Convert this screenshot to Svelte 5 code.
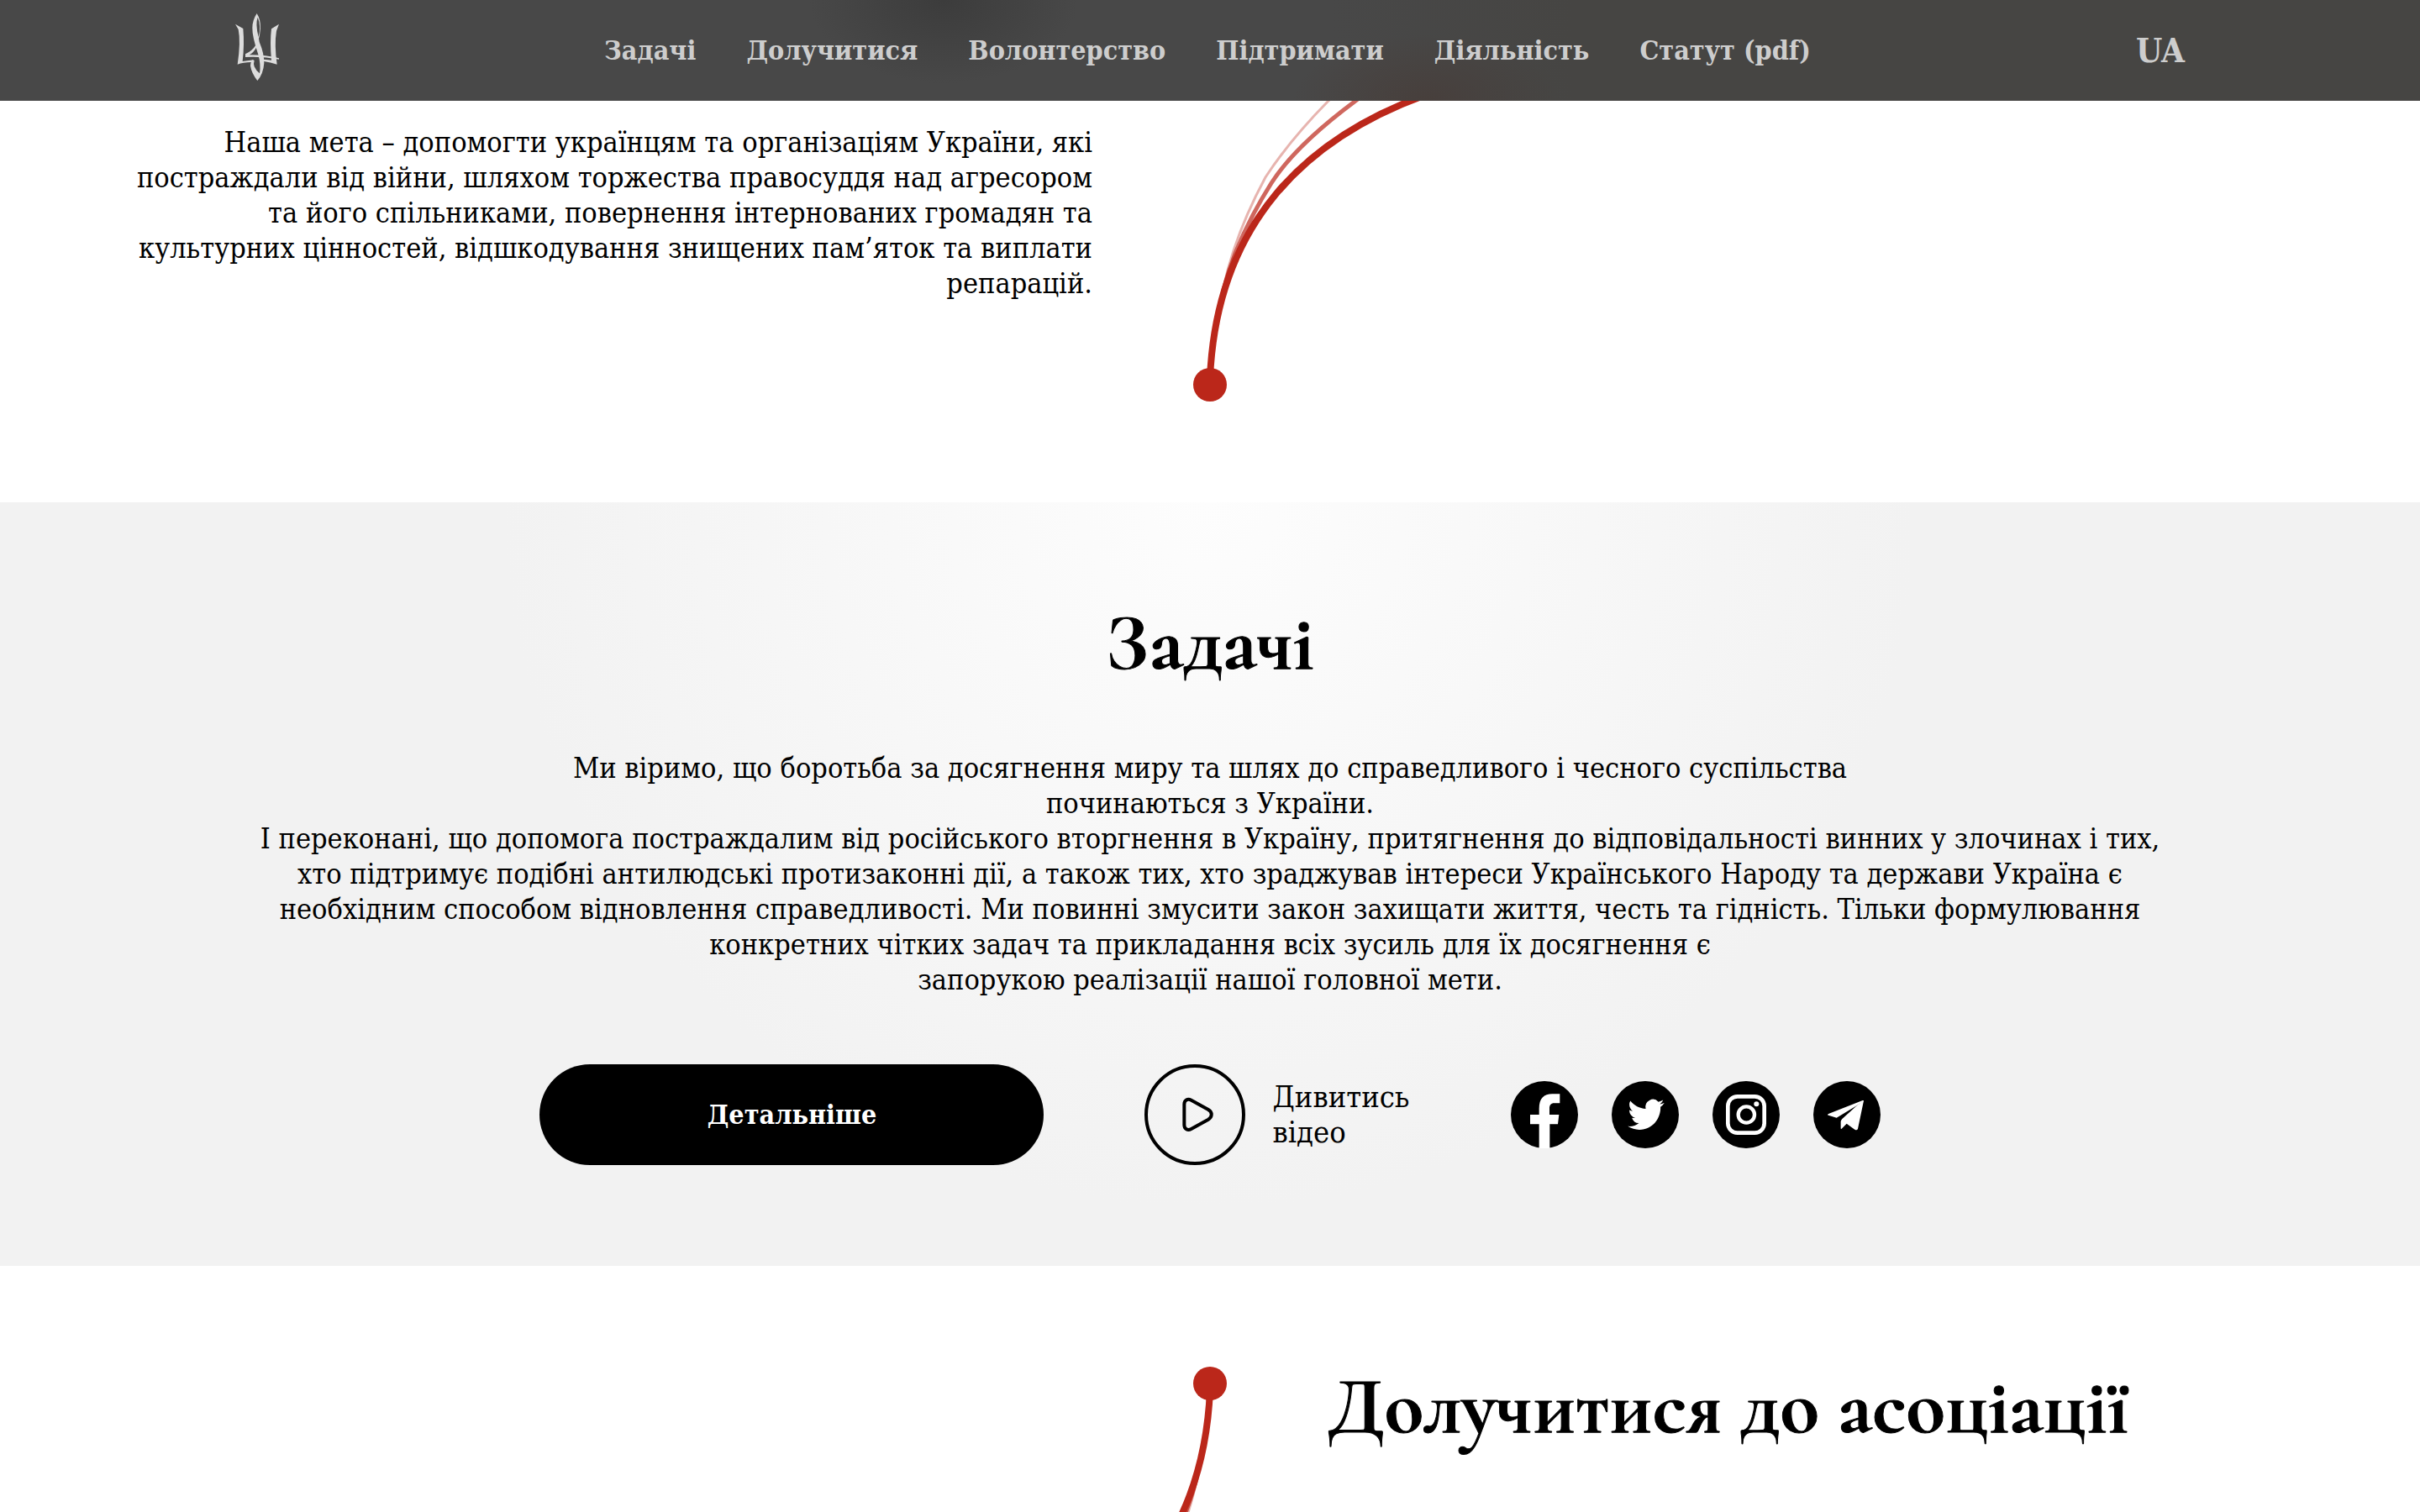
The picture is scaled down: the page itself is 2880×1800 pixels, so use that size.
<script>
  const links = ['Задачі', 'Долучитися', 'Волонтерство', 'Підтримати', 'Діяльність', 'Статут (pdf)'];

  const mission = [
    'Наша мета – допомогти українцям та організаціям України, які',
    'постраждали від війни, шляхом торжества правосуддя над агресором',
    'та його спільниками, повернення інтернованих громадян та',
    'культурних цінностей, відшкодування знищених пам’яток та виплати',
    'репарацій.'
  ];

  const tasks = [
    'Ми віримо, що боротьба за досягнення миру та шлях до справедливого і чесного суспільства',
    'починаються з України.',
    'І переконані, що допомога постраждалим від російського вторгнення в Україну, притягнення до відповідальності винних у злочинах і тих,',
    'хто підтримує подібні антилюдські протизаконні дії, а також тих, хто зраджував інтереси Українського Народу та держави Україна є',
    'необхідним способом відновлення справедливості. Ми повинні змусити закон захищати життя, честь та гідність. Тільки формулювання',
    'конкретних чітких задач та прикладання всіх зусиль для їх досягнення є',
    'запорукою реалізації нашої головної мети.'
  ];
</script>

{#snippet arc(flipped)}
  <svg class="arc" class:flipped viewBox="0 0 280 358" aria-hidden="true">
    <g fill="none" stroke="#bb271a">
      <path d="M156 222Q170 158 206 91Q234 48 280 1L300 -17" stroke-width="3" opacity=".35" />
      <path d="M156 225Q172 163 213 98Q241 54 312 1L330 -13" stroke-width="5" opacity=".7" />
      <path d="M140 330C148 145 255 45 394 -6" stroke-width="8" />
    </g>
    <circle cx="140" cy="338" r="20" fill="#bb271a" />
  </svg>
{/snippet}

<div class="page" lang="uk">
  <header>
    <a class="logo" href="#top" aria-label="Головна">
      <svg viewBox="120 48 156 240" aria-hidden="true">
        <g fill="#dcdcdc">
          <path d="M120 86L148 102Q153 160 146 219L185 214V222Q150 221 128 230Q140 150 131 105Z" />
          <path d="M276 86L267 110Q259 160 269 230Q245 222 222 219V212Q240 213 249 215Q243 150 249 103Z" />
          <path fill-rule="evenodd" d="M197 48Q211 70 210 100Q208 125 204 138L206 150Q223 190 223 225Q220 265 199 288Q178 262 174 235Q174 225 180 214L188 216Q184 228 188 238Q194 252 207 262Q212 230 202 195Q180 130 181 100Q181 72 197 48ZM200 62Q191 85 203 132Q213 92 200 62Z" />
          <path d="M156 193Q182 180 193 161L196 168Q186 188 170 196Q230 196 276 208V212Q220 201 156 204Z" />
        </g>
      </svg>
    </a>
    <nav>
      {#each links as link}
        <a href="#top">{link}</a>
      {/each}
    </nav>
    <button class="lang">UA</button>
  </header>

  <section class="split">
    <p class="mission">
      {#each mission as line}<span>{line}</span>{' '}{/each}
    </p>
    {@render arc(false)}
  </section>

  <section class="tasks">
    <h2>Задачі</h2>
    <p>
      {#each tasks as line}<span>{line}</span>{' '}{/each}
    </p>
    <div class="actions">
      <button class="more">Детальніше</button>
      <button class="video">
        <svg viewBox="0 0 360 360" fill="none" stroke="#000" stroke-width="12" aria-hidden="true">
          <circle cx="180" cy="180" r="174" />
          <path d="M142 143C142 128 154 121 167 128L228 162C243 171 243 188 228 197L167 231C154 238 142 231 142 217Z" />
        </svg>
        <span>Дивитись<br />відео</span>
      </button>
      <div class="social">
        <a href="#top" aria-label="Facebook">
          <svg viewBox="0 0 240 240">
            <circle cx="120" cy="120" r="120" />
            <path fill="#fff" d="M101 240V154H69V120H101V98C101 62 118 46 148 46H175V79H155C143 79 138 86 138 98V120H172L168 154H139V240Z" />
          </svg>
        </a>
        <a href="#top" aria-label="Twitter">
          <svg viewBox="0 0 240 240">
            <circle cx="120" cy="120" r="120" />
            <path fill="#fff" transform="translate(58 53) scale(5.4 5.55)" d="M23.953 4.57a10 10 0 01-2.825.775 4.958 4.958 0 002.163-2.723c-.951.555-2.005.959-3.127 1.184a4.92 4.92 0 00-8.384 4.482C7.69 8.095 4.067 6.13 1.64 3.162a4.822 4.822 0 00-.666 2.475c0 1.71.87 3.213 2.188 4.096a4.904 4.904 0 01-2.228-.616v.06a4.923 4.923 0 003.946 4.827 4.996 4.996 0 01-2.212.085 4.936 4.936 0 004.604 3.417 9.867 9.867 0 01-6.102 2.105c-.39 0-.779-.023-1.17-.067a13.995 13.995 0 007.557 2.209c9.053 0 13.998-7.496 13.998-13.985 0-.21 0-.42-.015-.63A9.935 9.935 0 0024 4.59z" />
          </svg>
        </a>
        <a href="#top" aria-label="Instagram">
          <svg viewBox="0 0 240 240">
            <circle cx="120" cy="120" r="120" />
            <g fill="none" stroke="#fff">
              <rect x="55" y="55" width="130" height="130" rx="34" stroke-width="14" />
              <circle cx="121" cy="120" r="29" stroke-width="13" />
            </g>
            <circle cx="157" cy="82" r="9" fill="#fff" />
          </svg>
        </a>
        <a href="#top" aria-label="Telegram">
          <svg viewBox="0 0 240 240">
            <circle cx="120" cy="120" r="120" />
            <g fill="#fff">
              <path d="M51 121Q50 118 56 116L176 69Q180 68 180 72L156 87L83 131L54 122Z" />
              <path d="M180 70L159 170Q156 178 148 173L119 152L101 170Q98 172 98 168V144Q99 139 103 135L156 87Z" />
            </g>
          </svg>
        </a>
      </div>
    </div>
  </section>

  <section class="split join">
    {@render arc(true)}
    <h2>Долучитися до асоціації</h2>
  </section>
</div>

<style>
  :global(body) {
    background: #fff;
  }

  .page {
    height: 100vh;
    overflow: hidden;
    color: #000;
    font-family: 'Roboto Slab', 'DejaVu Serif Condensed', 'DejaVu Serif', serif;
    font-size: 34px;
    font-weight: 300;
    line-height: 42px;
  }

  a {
    color: inherit;
    text-decoration: none;
  }

  button {
    padding: 0;
    border: 0;
    background: none;
    color: inherit;
    font: inherit;
    cursor: pointer;
  }

  svg {
    display: block;
  }

  header {
    position: relative;
    z-index: 1;
    display: flex;
    align-items: center;
    justify-content: space-between;
    height: 120px;
    padding: 0 280px;
    background:
      radial-gradient(ellipse 160px 100px at 39% 0, #3c3c3c, transparent),
      radial-gradient(ellipse 160px 80px at 59% 100%, #473f3c, transparent),
      linear-gradient(90deg, #484848 55%, #464543 65%);
    color: #cdcdcd;
    font-weight: 700;
  }

  .logo {
    align-self: flex-start;
    padding-top: 16px;
  }

  .logo svg {
    width: 52px;
    height: 80px;
  }

  nav {
    display: flex;
    gap: 60px;
    font-size: 32px;
  }

  .lang {
    font-size: 40px;
  }

  .split {
    display: grid;
    grid-template-columns: 1fr 280px 1fr;
    align-items: start;
    padding: 0 140px 120px;
  }

  .join {
    padding-top: 120px;
  }

  .join .arc {
    grid-column: 2;
  }

  .arc {
    width: 280px;
    height: 358px;
    overflow: visible;
  }

  .flipped {
    transform: rotate(180deg);
  }

  p {
    margin: 0;
  }

  p span {
    display: block;
    white-space: nowrap;
  }

  .mission {
    padding-top: 28px;
    text-align: right;
  }

  h2 {
    margin: 0;
    font-family: 'Cormorant', 'Cormorant Garamond', 'Liberation Serif', serif;
    font-size: 96px;
    font-weight: 700;
    line-height: 95px;
    white-space: nowrap;
    -webkit-text-stroke: 1px #000;
  }

  .tasks {
    display: flex;
    flex-direction: column;
    align-items: center;
    gap: 80px;
    padding: 120px 0;
    background: radial-gradient(circle 840px at 50% 0, #fdfdfd, #f2f2f2);
    text-align: center;
  }

  .actions {
    display: flex;
    align-items: center;
    gap: 120px;
  }

  .more {
    width: 600px;
    height: 120px;
    border-radius: 60px;
    background: #000;
    color: #fff;
    font-size: 32px;
    font-weight: 700;
  }

  .video {
    display: flex;
    align-items: center;
    gap: 32px;
    font-size: 36px;
    text-align: left;
  }

  .video svg {
    width: 120px;
    height: 120px;
  }

  .social {
    display: flex;
    gap: 40px;
  }

  .social svg {
    width: 80px;
    height: 80px;
  }
</style>
